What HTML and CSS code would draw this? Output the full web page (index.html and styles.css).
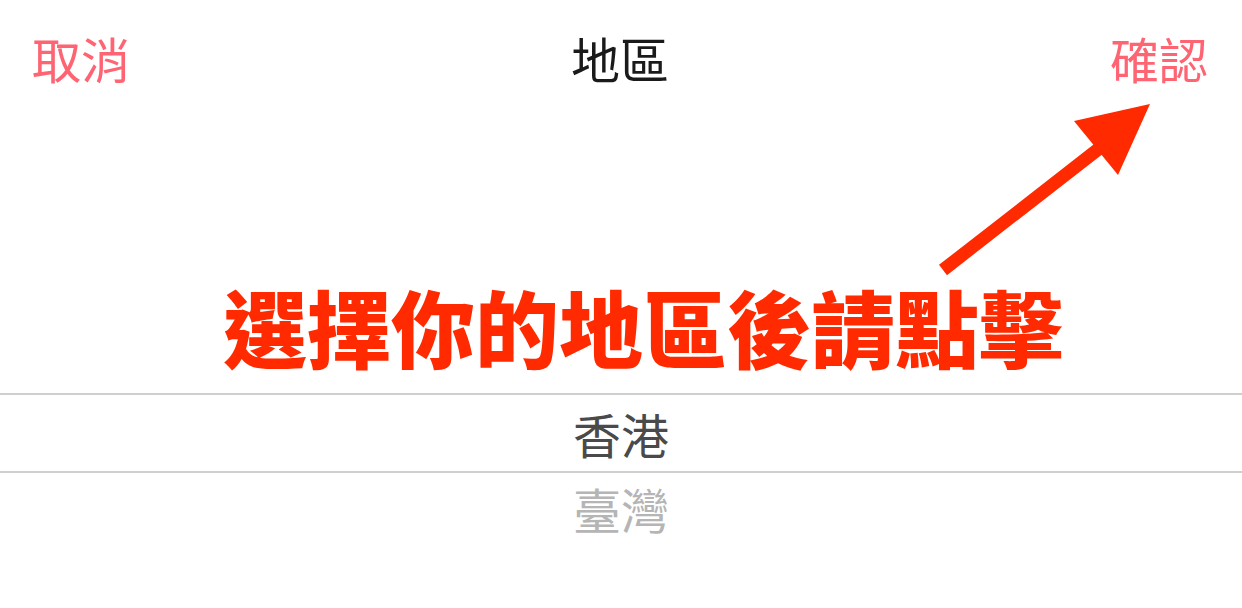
FILE: index.html
```html
<!DOCTYPE html>
<html lang="zh-Hant">
<head>
<meta charset="utf-8">
<link rel="stylesheet" href="styles.css">
</head>
<body>
<div class="page">
  <header class="bar">
    <span class="btn">取消</span>
    <span class="title">地區</span>
    <span class="btn">確認</span>
  </header>
  <div class="hint">
    <div class="hint-text">選擇你的地區後請點擊</div>
  </div>
  <div class="picker">
    <div class="row selected">香港</div>
    <div class="row faded">臺灣</div>
  </div>
  <svg class="arrow" width="1242" height="608" viewBox="0 0 1242 608">
    <line x1="943" y1="270" x2="1110" y2="140" stroke="#ff2a00" stroke-width="13"/>
    <polygon points="1150,104 1074,121 1118,175" fill="#ff2a00"/>
  </svg>
</div>
</body>
</html>
```
FILE: styles.css
```css
html, body {
  margin: 0;
  padding: 0;
  background: #ffffff;
}
.page {
  position: relative;
  width: 1242px;
  height: 608px;
  overflow: hidden;
  font-family: "Noto Sans CJK TC", "Noto Sans CJK SC", sans-serif;
}
.bar {
  height: 116px;
  display: flex;
  justify-content: space-between;
  align-items: center;
  padding: 0 34px 0 32px;
  font-size: 49px;
  line-height: 60px;
}
.btn {
  color: #ff6473;
}
.title {
  color: #1a1a1a;
}
.hint {
  height: 277px;
  display: flex;
  align-items: flex-end;
  justify-content: center;
}
.hint-text {
  font-size: 84px;
  font-weight: 900;
  line-height: 100px;
  margin-bottom: 17px;
  padding-left: 44px;
  color: #ff2a00;
}
.picker {
  display: flex;
  flex-direction: column;
}
.row {
  text-align: center;
  font-size: 48px;
}
.selected {
  border-top: 2px solid #cfcfcf;
  border-bottom: 2px solid #cfcfcf;
  line-height: 76px;
  color: #4a4a4a;
}
.faded {
  line-height: 70px;
  color: #b5b5b5;
}
.arrow {
  position: absolute;
  left: 0;
  top: 0;
}
```
